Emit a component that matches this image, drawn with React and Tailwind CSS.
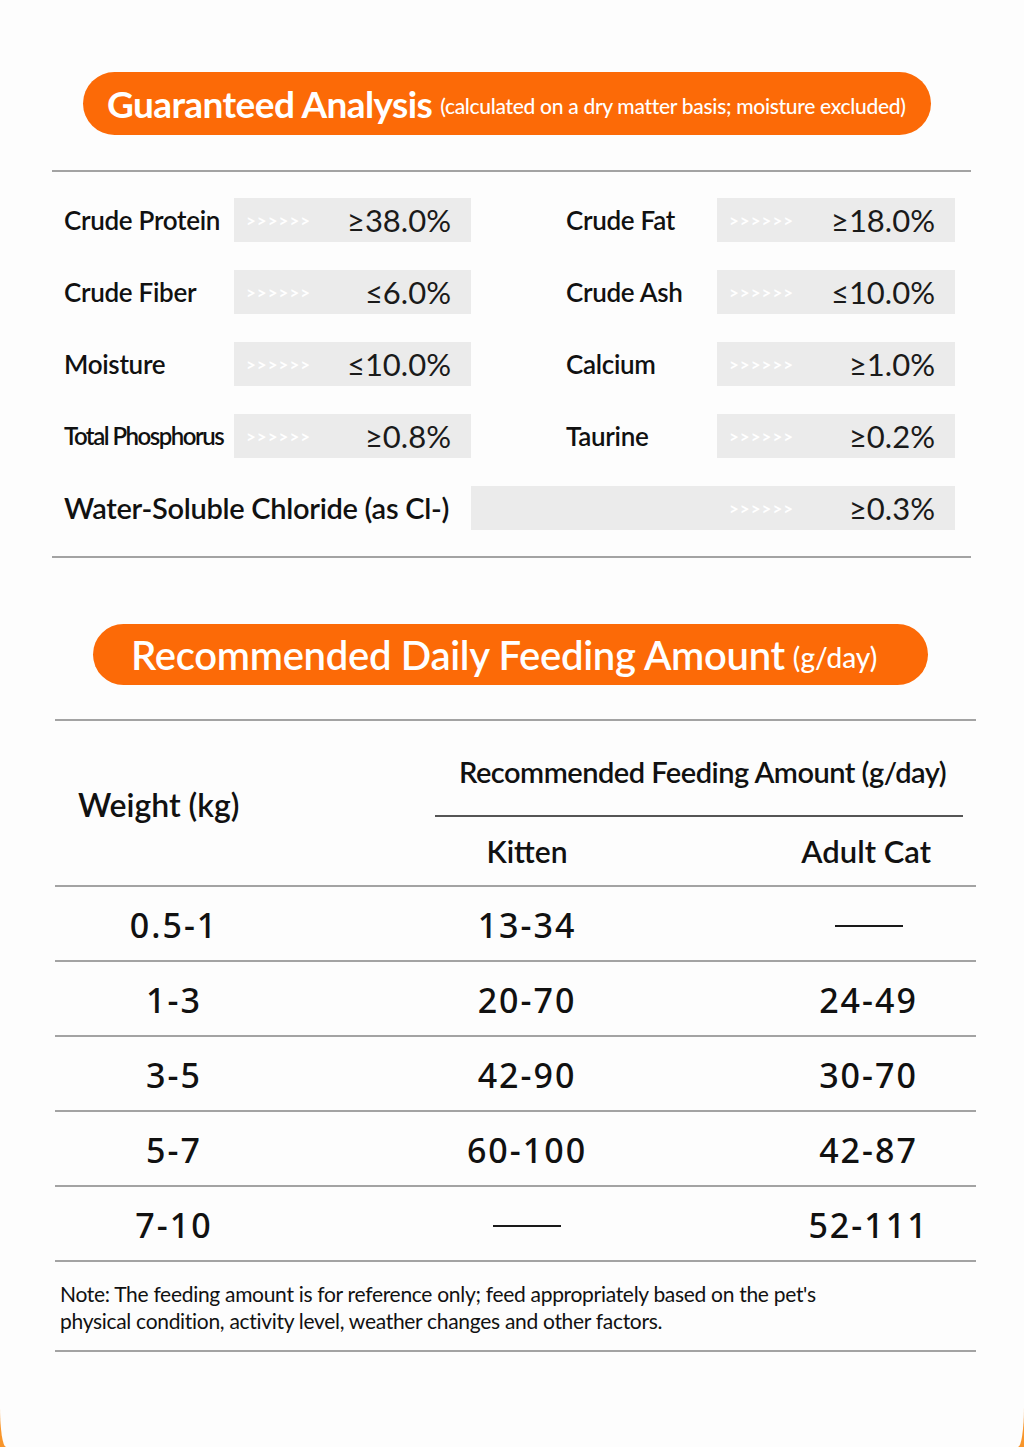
import React from 'react'

/* =======================
   Data
======================= */

const analysis = [
  { left: ['Crude Protein', '≥38.0%'], right: ['Crude Fat', '≥18.0%'] },
  { left: ['Crude Fiber', '≤6.0%'], right: ['Crude Ash', '≤10.0%'] },
  { left: ['Moisture', '≤10.0%'], right: ['Calcium', '≥1.0%'] },
  { left: ['Total Phosphorus', '≥0.8%', true], right: ['Taurine', '≥0.2%'] },
]

const feeding = [
  { w: '0.5-1', kitten: '13-34', adult: null },
  { w: '1-3', kitten: '20-70', adult: '24-49' },
  { w: '3-5', kitten: '42-90', adult: '30-70' },
  { w: '5-7', kitten: '60-100', adult: '42-87' },
  { w: '7-10', kitten: null, adult: '52-111' },
]

const font = "font-['Lato','Noto_Sans','DejaVu_Sans',sans-serif]"

/* =======================
   UI Components
======================= */

function Chevrons() {
  return <span className="text-[17px] text-white tracking-[1px] leading-none font-bold">&gt;&gt;&gt;&gt;&gt;&gt;</span>
}

function ValueBox({ value }) {
  return (
    <div className="h-[44px] bg-[#ebebeb] flex items-center justify-between pl-3 pr-5">
      <Chevrons />
      <span className="text-[31px] text-[#1a1a1a] leading-none">{value}</span>
    </div>
  )
}

function Dash() {
  return <div className="w-[68px] h-[2px] bg-[#1a1a1a]" />
}

/* =======================
   Page
======================= */

export default function App() {
  return (
    <div className={`bg-[#f8952a] ${font}`}>
      <div className="h-[1447px] bg-[#fdfdfd] rounded-b-[6px_40px] pt-[72px] overflow-hidden">
        {/* Guaranteed Analysis pill */}
        <div className="mx-[83px] w-[848px] h-[63px] rounded-full bg-[#fc6a07] flex items-center pl-6 text-white">
          <span className="text-[37px] font-bold tracking-[-0.6px]">Guaranteed Analysis</span>
          <span className="text-[21px] font-medium ml-2 mt-1 tracking-[-0.3px]">
            (calculated on a dry matter basis; moisture excluded)
          </span>
        </div>

        {/* Analysis grid */}
        <div className="mt-[35px] mx-[52px] w-[919px] border-y-2 border-[#a3a3a3] pt-[26px] pb-[26px] pl-3 flex flex-col gap-[28px] text-[#111]">
          {analysis.map((row, i) => (
            <div key={i} className="grid grid-cols-[170px_237px_95px_151px_238px] items-center">
              <span
                className={
                  row.left[2]
                    ? 'text-[24px] font-semibold tracking-[-1.5px]'
                    : 'text-[26px] font-semibold tracking-[-0.3px]'
                }
              >
                {row.left[0]}
              </span>
              <ValueBox value={row.left[1]} />
              <span />
              <span className="text-[26px] font-semibold tracking-[-0.3px]">{row.right[0]}</span>
              <ValueBox value={row.right[1]} />
            </div>
          ))}
          <div className="grid grid-cols-[407px_484px] items-center">
            <span className="text-[29px] font-semibold tracking-[-0.3px]">Water-Soluble Chloride (as Cl-)</span>
            <div className="h-[44px] bg-[#ebebeb] flex justify-end">
              <div className="w-[238px] h-[44px] flex items-center justify-between pl-3 pr-5">
                <Chevrons />
                <span className="text-[31px] text-[#1a1a1a] leading-none">≥0.3%</span>
              </div>
            </div>
          </div>
        </div>

        {/* Feeding pill */}
        <div className="mt-[66px] mx-[93px] w-[835px] h-[61px] rounded-full bg-[#fc6a07] flex items-center pl-[38px] text-white">
          <span className="text-[40px] font-semibold tracking-[-0.3px]">Recommended Daily Feeding Amount</span>
          <span className="text-[28px] font-medium ml-2 mt-1">(g/day)</span>
        </div>

        {/* Feeding table */}
        <div className="mt-[34px] mx-[55px] w-[921px] text-[#111]">
          <div className="border-t-2 border-b-2 border-[#a3a3a3] flex h-[168px]">
            <div className="w-[380px] flex items-center pl-[23px] pt-[4px]">
              <span className="text-[32px] font-semibold">Weight (kg)</span>
            </div>
            <div className="w-[528px] flex flex-col">
              <div className="h-[96px] border-b-2 border-[#555] pl-6 pt-[34px]">
                <span className="text-[29px] font-semibold tracking-[-0.5px] leading-[34px]">
                  Recommended Feeding Amount (g/day)
                </span>
              </div>
              <div className="flex-1 flex items-center justify-between pr-[32px]">
                <span className="w-[184px] text-center text-[30px] font-semibold">Kitten</span>
                <span className="text-[31px] font-semibold">Adult Cat</span>
              </div>
            </div>
          </div>

          {feeding.map(r => (
            <div
              key={r.w}
              className="h-[75px] border-b-2 border-[#a3a3a3] grid grid-cols-[238px_468px_1fr] items-center pt-[4px] text-[34px] tracking-[2px] font-medium font-['Noto_Sans',sans-serif]"
            >
              <div className="text-center">{r.w}</div>
              <div className="flex justify-center">{r.kitten ?? <Dash />}</div>
              <div className="flex justify-center">{r.adult ?? <Dash />}</div>
            </div>
          ))}

          {/* Note */}
          <div className="border-b-2 border-[#a3a3a3] pl-[5px] pt-[18px] pb-[16px] text-[21px] leading-[27px] tracking-[-0.3px] text-[#111]">
            Note: The feeding amount is for reference only; feed appropriately based on the pet's
            <br />
            physical condition, activity level, weather changes and other factors.
          </div>
        </div>
      </div>
    </div>
  )
}
